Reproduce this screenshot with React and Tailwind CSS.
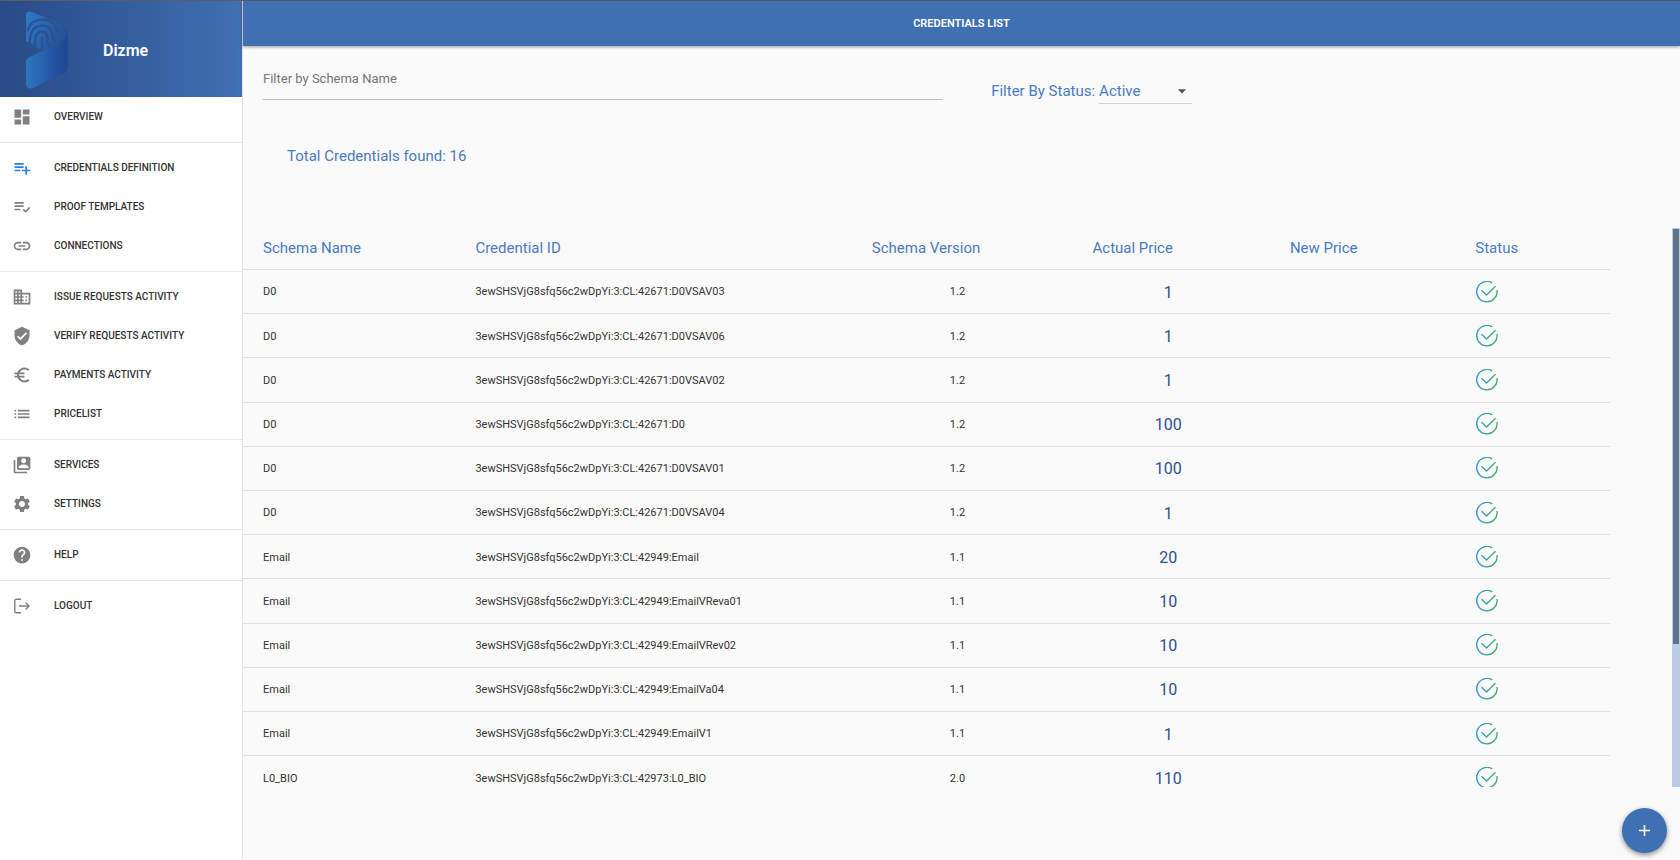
import { useState } from "react";
import {
  MdDashboard,
  MdPlaylistAdd,
  MdPlaylistAddCheck,
  MdLink,
  MdDomain,
  MdVerifiedUser,
  MdEuroSymbol,
  MdList,
  MdSwitchAccount,
  MdSettings,
  MdHelp,
  MdArrowDropDown,
  MdAdd,
} from "react-icons/md";

const LogoutIcon = () => (
  <svg width="20" height="20" viewBox="0 0 20 20" fill="none" stroke="currentColor" strokeWidth="1.4">
    <path d="M9 3.2H4.4Q2.8 3.2 2.8 4.8V15.2Q2.8 16.8 4.4 16.8H9" />
    <path d="M7 10H17M13.6 6.6L17 10L13.6 13.4" />
  </svg>
);

const menuGroups = [
  [{ label: "Overview", icon: MdDashboard }],
  [
    { label: "Credentials Definition", icon: MdPlaylistAdd, active: true },
    { label: "Proof Templates", icon: MdPlaylistAddCheck },
    { label: "Connections", icon: MdLink },
  ],
  [
    { label: "Issue Requests Activity", icon: MdDomain },
    { label: "Verify Requests Activity", icon: MdVerifiedUser },
    { label: "Payments Activity", icon: MdEuroSymbol },
    { label: "Pricelist", icon: MdList },
  ],
  [
    { label: "Services", icon: MdSwitchAccount },
    { label: "Settings", icon: MdSettings },
  ],
  [{ label: "Help", icon: MdHelp }],
  [{ label: "Logout", icon: LogoutIcon }],
];

const credentials = [
  { schema: "D0", id: "3ewSHSVjG8sfq56c2wDpYi:3:CL:42671:D0VSAV03", version: "1.2", price: 1 },
  { schema: "D0", id: "3ewSHSVjG8sfq56c2wDpYi:3:CL:42671:D0VSAV06", version: "1.2", price: 1 },
  { schema: "D0", id: "3ewSHSVjG8sfq56c2wDpYi:3:CL:42671:D0VSAV02", version: "1.2", price: 1 },
  { schema: "D0", id: "3ewSHSVjG8sfq56c2wDpYi:3:CL:42671:D0", version: "1.2", price: 100 },
  { schema: "D0", id: "3ewSHSVjG8sfq56c2wDpYi:3:CL:42671:D0VSAV01", version: "1.2", price: 100 },
  { schema: "D0", id: "3ewSHSVjG8sfq56c2wDpYi:3:CL:42671:D0VSAV04", version: "1.2", price: 1 },
  { schema: "Email", id: "3ewSHSVjG8sfq56c2wDpYi:3:CL:42949:Email", version: "1.1", price: 20 },
  { schema: "Email", id: "3ewSHSVjG8sfq56c2wDpYi:3:CL:42949:EmailVReva01", version: "1.1", price: 10 },
  { schema: "Email", id: "3ewSHSVjG8sfq56c2wDpYi:3:CL:42949:EmailVRev02", version: "1.1", price: 10 },
  { schema: "Email", id: "3ewSHSVjG8sfq56c2wDpYi:3:CL:42949:EmailVa04", version: "1.1", price: 10 },
  { schema: "Email", id: "3ewSHSVjG8sfq56c2wDpYi:3:CL:42949:EmailV1", version: "1.1", price: 1 },
  { schema: "L0_BIO", id: "3ewSHSVjG8sfq56c2wDpYi:3:CL:42973:L0_BIO", version: "2.0", price: 110 },
];

const Logo = () => (
  <svg width="44" height="80" viewBox="0 0 44 80" fill="none">
    <defs>
      <linearGradient id="logoFace" x1="0" y1="0" x2="1" y2="0">
        <stop offset="0" stopColor="#2f74c0" />
        <stop offset="1" stopColor="#1d4690" />
      </linearGradient>
      <linearGradient id="logoTop" x1="0" y1="10" x2="42" y2="26" gradientUnits="userSpaceOnUse">
        <stop offset="0" stopColor="#2f78c6" />
        <stop offset="0.6" stopColor="#285ea8" />
        <stop offset="1" stopColor="#26508f" />
      </linearGradient>
    </defs>
    {/* lower face */}
    <path
      d="M42.7 20V57.7Q42.7 61 38.5 63L8 78Q1 80 1 73.5V52Q1 48.6 4 47.2L18 40.5Q24 39 30 33Q40 30 40 20Z"
      fill="url(#logoFace)"
    />
    {/* fingerprint */}
    <path
      d="M1 5Q2 0 7 2L39 15.5Q42.7 17.5 42.7 22Q40 32 34 33L27 38L17 39.5L12 38L9 35L6 33L5 31.5L1 32Z"
      fill="url(#logoTop)"
    />
    <g stroke="#2c5191" strokeWidth="2.2" strokeLinecap="round">
      <path d="M3 20Q6 10 17 9.5Q27 9.5 31 17Q33 27 38.5 25" />
      <path d="M5 31Q5 16 17.5 15.5Q27 16 27.5 26Q28 32 32 32" />
      <path d="M10.5 36.5Q8 22 17.5 21.5Q23 22 22.5 31Q22.5 35 25 37" />
      <path d="M17 28V38" />
    </g>
  </svg>
);

const CheckIcon = () => (
  <svg width="22" height="22" viewBox="0 0 22 22" fill="none" stroke="url(#checkGradient)" strokeWidth="1.4" role="img" aria-label="Active">
    <path d="M16.2 1.9A10.2 10.2 0 1 0 21 9" />
    <path d="M5.5 9.2L10.5 14L19.5 5.2" />
  </svg>
);

const Sidebar = () => (
  <aside className="w-[243px] shrink-0 border-r border-[#e2e2e2] bg-white">
    <div className="flex h-24 items-center bg-linear-to-r from-[#294a86] to-[#3f70b3] pl-[25px] pt-px">
      <Logo />
      <h1 className="pl-[34px] pt-0.5 text-base font-semibold text-white">Dizme</h1>
    </div>
    <nav>
      {menuGroups.map((group, index) => (
        <ul key={index} className="border-b border-[#e6e6e6] pb-[6px] pt-[5px] first:pt-0 last:border-b-0">
          {group.map(({ label, icon: Icon, active }) => (
            <li key={label}>
              <a href="#" className="flex h-[39px] items-center pl-3 text-[10px] font-medium uppercase text-[#333333]">
                <span className={active ? "w-[42px] text-[#2b7de9]" : "w-[42px] text-[#808080]"}>
                  <Icon size={20} />
                </span>
                {label}
              </a>
            </li>
          ))}
        </ul>
      ))}
    </nav>
  </aside>
);

const App = () => {
  const [filter, setFilter] = useState("");
  const [status, setStatus] = useState("Active");

  return (
    <div className="flex min-h-screen border-t border-[#5a5d66] bg-[#fafafa] font-[Roboto,sans-serif]">
      <Sidebar />

      <main className="relative flex min-w-0 flex-1 flex-col">
        <header className="flex h-[45px] shrink-0 items-center justify-center bg-[#3f70b3] pt-0.5 shadow-[0_1px_3px_rgba(0,0,0,0.4)]">
          <h2 className="text-[11px] font-semibold uppercase text-white">Credentials List</h2>
        </header>

        {/* Filters */}
        <div className="flex items-start pl-5 pt-4 text-[15px] text-[#4a7bc0]">
          <input
            type="text"
            aria-label="Filter by Schema Name"
            placeholder="Filter by Schema Name"
            value={filter}
            onChange={(e) => setFilter(e.target.value)}
            className="h-[38px] w-[48%] border-b border-[#bdbdbd] pb-1 text-[13px] text-[#444444] outline-none placeholder:text-[#757575]"
          />
          <div className="flex items-center pl-12 pt-[17px]">
            <label htmlFor="status">Filter By Status:</label>
            <div className="relative ml-1">
              <select
                id="status"
                value={status}
                onChange={(e) => setStatus(e.target.value)}
                className="h-[25px] w-[93px] appearance-none border-b border-[#d0d0d0] bg-transparent outline-none"
              >
                <option>Active</option>
                <option>Inactive</option>
              </select>
              <MdArrowDropDown size={20} className="pointer-events-none absolute right-0 top-0.5 text-[#555555]" />
            </div>
          </div>
        </div>

        <p className="pl-11 pt-[41px] text-[15px] text-[#4a7bc0]">Total Credentials found: 16</p>

        {/* Credentials table */}
        <div className="mt-[60px] flex h-[559px] overflow-hidden">
          <svg width="0" height="0" className="absolute">
            <linearGradient id="checkGradient" x1="0" y1="0" x2="22" y2="0" gradientUnits="userSpaceOnUse">
              <stop offset="0" stopColor="#3498db" />
              <stop offset="1" stopColor="#4caf6a" />
            </linearGradient>
          </svg>
          <div className="flex-1 pr-[62px]">
            <table className="h-[573px] w-full table-fixed text-left text-[11px] text-[#333333]">
              <thead>
                <tr className="h-[42px] border-b border-[#dedede] text-[15px] text-[#4a7bc0]">
                  <th className="w-[17%] pl-5 font-normal">Schema Name</th>
                  <th className="w-[29%] font-normal">Credential ID</th>
                  <th className="w-[16%] font-normal">Schema Version</th>
                  <th className="w-[14%] pl-0.5 font-normal">Actual Price</th>
                  <th className="w-[14%] pl-2 font-normal">New Price</th>
                  <th className="w-[10%] pl-0.5 font-normal">Status</th>
                </tr>
              </thead>
              <tbody>
                {credentials.map((row) => (
                  <tr key={row.id} className="border-b border-[#e0e0e0]">
                    <td className="pl-5 pt-0.5">{row.schema}</td>
                    <td className="pt-0.5">{row.id}</td>
                    <td className="pl-[78px] pt-0.5">{row.version}</td>
                    <td className="pr-9 pt-0.5 text-center text-base text-[#2d4f93]">{row.price}</td>
                    <td></td>
                    <td className="pl-[3px]">
                      <CheckIcon />
                    </td>
                  </tr>
                ))}
              </tbody>
            </table>
          </div>
          {/* Scrollbar */}
          <div className="w-2 bg-[#b9cce3] px-px pt-px">
            <div className="h-[415px] bg-[#5d7485]"></div>
          </div>
        </div>

        <button
          type="button"
          aria-label="Add credential"
          className="absolute bottom-[7px] right-[13px] flex size-[45px] items-center justify-center rounded-full bg-[#3f70b3] text-white shadow-[0_2px_5px_rgba(0,0,0,0.45)]"
        >
          <MdAdd size={19} />
        </button>
      </main>
    </div>
  );
};

export default App;
